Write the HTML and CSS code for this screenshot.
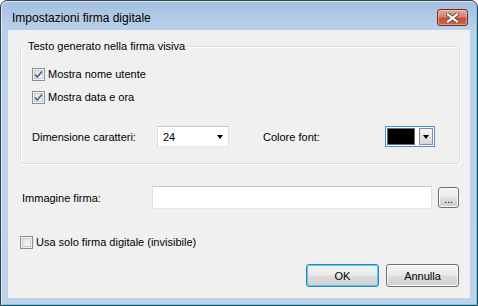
FILE: index.html
```html
<!DOCTYPE html>
<html>
<head>
<meta charset="utf-8">
<link rel="stylesheet" href="styles.css">
</head>
<body>
<div class="window">
  <div class="titlebar">
    <span class="title">Impostazioni firma digitale</span>
    <button class="close" aria-label="Chiudi">
      <svg width="13" height="10" viewBox="0 0 13 10">
        <path d="M2 1.5 L11 8.5 M11 1.5 L2 8.5" stroke="#5b4a47" stroke-width="4" stroke-linecap="square" fill="none"/>
        <path d="M2 1.5 L11 8.5 M11 1.5 L2 8.5" stroke="#ffffff" stroke-width="2.2" stroke-linecap="square" fill="none"/>
      </svg>
    </button>
  </div>
  <div class="client">
    <div class="group">
      <span class="legend">Testo generato nella firma visiva</span>
      <label class="check">
        <span class="box"><svg width="13" height="13" viewBox="0 0 13 13"><path d="M3 6.5 L5.3 9 L10 3.5" stroke="#4a64a0" stroke-width="1.8" fill="none"/></svg></span>
        Mostra nome utente
      </label>
      <label class="check">
        <span class="box"><svg width="13" height="13" viewBox="0 0 13 13"><path d="M3 6.5 L5.3 9 L10 3.5" stroke="#4a64a0" stroke-width="1.8" fill="none"/></svg></span>
        Mostra data e ora
      </label>
      <div class="font-row">
        <span class="size-lbl">Dimensione caratteri:</span>
        <div class="combo"><span>24</span><span class="arrow"></span></div>
        <span class="color-lbl">Colore font:</span>
        <div class="color-combo"><span class="swatch"></span><span class="cbtn"><span class="arrow"></span></span></div>
      </div>
    </div>
    <div class="image-row">
      <span class="img-lbl">Immagine firma:</span>
      <div class="textbox"></div>
      <button class="btn browse">...</button>
    </div>
    <label class="check invisible">
      <span class="box"></span>
      Usa solo firma digitale (invisibile)
    </label>
    <div class="buttons">
      <button class="btn default">OK</button>
      <button class="btn">Annulla</button>
    </div>
  </div>
</div>
</body>
</html>
```
FILE: styles.css
```css
html, body {
  margin: 0;
  padding: 0;
  width: 478px;
  height: 306px;
  overflow: hidden;
  background: #ffffff;
}

body {
  font-family: "Liberation Sans", Arial, sans-serif;
  font-size: 11px;
  color: #000;
}

.window {
  box-sizing: border-box;
  width: 478px;
  height: 306px;
  border: 1px solid #34414f;
  border-radius: 7px 7px 0 0;
  background: linear-gradient(to bottom, #a3bee0 0px, #b3cbe7 18px, #bad1ea 30px, #bcd3eb 100%);
  box-shadow: inset 1px 1px 0 #dce9f6, inset -1px -1px 0 #62d3ef;
  padding: 0 7px 7px 7px;
  display: flex;
  flex-direction: column;
}

.titlebar {
  height: 29px;
  flex: none;
  display: flex;
  justify-content: space-between;
  align-items: flex-start;
}

.title {
  font-size: 12px;
  line-height: 15px;
  padding: 10px 0 0 4px;
}

.close {
  margin: 8px 2px 0 0;
  width: 31px;
  height: 17px;
  box-sizing: border-box;
  padding: 0;
  border: 1px solid #6b3128;
  border-radius: 3px;
  background: linear-gradient(to bottom, #e5a898 0%, #d7826d 45%, #c7503a 55%, #cf6a4f 100%);
  box-shadow: inset 0 0 0 1px rgba(255, 220, 210, 0.45);
  display: flex;
  align-items: center;
  justify-content: center;
}

.client {
  flex: 1;
  background: #f0f0f0;
  display: flex;
  flex-direction: column;
  align-items: flex-start;
}

.group {
  position: relative;
  box-sizing: border-box;
  margin: 16px 0 0 12px;
  width: 440px;
  height: 118px;
  border: 1px solid #d5dfe5;
  border-radius: 3px;
  box-shadow: 1px 1px 0 #ffffff, inset 1px 1px 0 #ffffff;
  padding: 19px 0 0 11px;
  display: flex;
  flex-direction: column;
  gap: 7px;
}

.legend {
  position: absolute;
  top: -7px;
  left: 5px;
  padding: 0 2px;
  line-height: 13px;
  background: #f0f0f0;
}

.check {
  display: flex;
  align-items: center;
  height: 16px;
  white-space: nowrap;
}

.box {
  box-sizing: border-box;
  width: 13px;
  height: 13px;
  margin-right: 3px;
  border: 1px solid #8e8f8f;
  background: linear-gradient(135deg, #dcdcdc 0%, #f0f0f0 60%, #fbfbfb 100%);
  box-shadow: inset 0 0 0 1px #f4f4f4, inset 0 0 0 2px #c9cdd3;
  position: relative;
  flex: none;
}

.box svg {
  position: absolute;
  left: -1px;
  top: -1px;
}

.font-row {
  display: flex;
  align-items: center;
  height: 21px;
  margin-top: 14px;
}

.size-lbl {
  width: 125px;
}

.combo {
  box-sizing: border-box;
  width: 72px;
  height: 21px;
  background: #fff;
  border: 1px solid;
  border-color: #c6c9cf #dde1e7 #e3e9ef #dde1e7;
  display: flex;
  align-items: center;
  justify-content: space-between;
  padding: 0 5px 0 5px;
}

.arrow {
  width: 0;
  height: 0;
  border-left: 3.5px solid transparent;
  border-right: 3.5px solid transparent;
  border-top: 4px solid #000;
}

.color-lbl {
  margin-left: 34px;
  width: 122px;
}

.color-combo {
  box-sizing: border-box;
  width: 50px;
  height: 21px;
  border: 1px solid #3d96e8;
  background: #fff;
  padding: 1px;
  display: flex;
  align-items: flex-start;
  gap: 4px;
}

.swatch {
  box-sizing: border-box;
  width: 29px;
  height: 17px;
  background: #000;
  border: 1px solid #6d6d6d;
}

.cbtn {
  box-sizing: border-box;
  width: 14px;
  height: 17px;
  border: 1px solid #8c8c8c;
  background: linear-gradient(to bottom, #f6f6f6 0%, #e6e6e6 50%, #d6d6d6 100%);
  display: flex;
  align-items: center;
  justify-content: center;
}

.image-row {
  display: flex;
  align-items: center;
  margin: 22px 0 0 14px;
  height: 23px;
}

.img-lbl {
  width: 130px;
}

.textbox {
  box-sizing: border-box;
  width: 280px;
  height: 23px;
  background: #fff;
  border: 1px solid;
  border-color: #c6c9cf #dde1e7 #e3e9ef #dde1e7;
}

.btn {
  box-sizing: border-box;
  font-family: "Liberation Sans", Arial, sans-serif;
  font-size: 11px;
  color: #000;
  padding: 0;
  border: 1px solid #707070;
  border-radius: 3px;
  background: linear-gradient(to bottom, #f2f2f2 0%, #ebebeb 48%, #dddddd 52%, #cfcfcf 100%);
  box-shadow: inset 0 0 0 1px #fbfbfb;
  width: 73px;
  height: 23px;
}

.browse {
  width: 21px;
  height: 21px;
  margin-left: 6px;
  line-height: 14px;
  padding-top: 3px;
}

.invisible {
  margin: 25px 0 0 12px;
}

.buttons {
  align-self: stretch;
  display: flex;
  justify-content: flex-end;
  gap: 7px;
  margin-top: 14px;
  padding-right: 11px;
}

.default {
  border-color: #3c7fb1;
  box-shadow: inset 0 0 0 1px #48d0f5;
}
```
